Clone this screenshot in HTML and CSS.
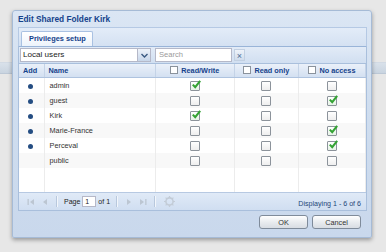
FILE: index.html
```html
<!DOCTYPE html>
<html lang="en">

<head>
  <meta charset="UTF-8">
  <title>Edit Shared Folder Kirk</title>
  <link rel="stylesheet" href="styles.css">
</head>

<body>
  <div class="desktop">
    <div class="bg-band"></div>
  </div>

  <div class="window">
    <div class="win-title">Edit Shared Folder Kirk</div>

    <div class="win-body">
      <div class="tabs">
        <div class="tab active">Privileges setup</div>
      </div>

      <div class="panel">
        <div class="toolbar">
          <div class="combo">
            <span class="combo-text">Local users</span>
            <span class="combo-trigger">
              <svg width="7" height="5" viewBox="0 0 7 5"><path d="M0.5 1 L3.5 4 L6.5 1" fill="none" stroke="#3b5a82" stroke-width="1.4"/></svg>
            </span>
          </div>
          <div class="search">Search</div>
          <div class="clear-btn">×</div>
        </div>

        <table class="grid">
          <colgroup>
            <col class="c-add">
            <col class="c-name">
            <col class="c-rw">
            <col class="c-ro">
            <col class="c-na">
          </colgroup>
          <thead>
            <tr>
              <th class="left">Add</th>
              <th class="left">Name</th>
              <th><span class="hbox"></span>Read/Write</th>
              <th><span class="hbox"></span>Read only</th>
              <th><span class="hbox"></span>No access</th>
            </tr>
          </thead>
          <tbody>
            <tr>
              <td><span class="dot"></span></td>
              <td class="name">admin</td>
              <td><span class="cb on"></span></td>
              <td><span class="cb"></span></td>
              <td><span class="cb"></span></td>
            </tr>
            <tr class="alt">
              <td><span class="dot"></span></td>
              <td class="name">guest</td>
              <td><span class="cb"></span></td>
              <td><span class="cb"></span></td>
              <td><span class="cb on"></span></td>
            </tr>
            <tr>
              <td><span class="dot"></span></td>
              <td class="name">Kirk</td>
              <td><span class="cb on"></span></td>
              <td><span class="cb"></span></td>
              <td><span class="cb"></span></td>
            </tr>
            <tr class="alt">
              <td><span class="dot"></span></td>
              <td class="name">Marie-France</td>
              <td><span class="cb"></span></td>
              <td><span class="cb"></span></td>
              <td><span class="cb on"></span></td>
            </tr>
            <tr>
              <td><span class="dot"></span></td>
              <td class="name">Perceval</td>
              <td><span class="cb"></span></td>
              <td><span class="cb"></span></td>
              <td><span class="cb on"></span></td>
            </tr>
            <tr class="alt">
              <td></td>
              <td class="name">public</td>
              <td><span class="cb"></span></td>
              <td><span class="cb"></span></td>
              <td><span class="cb"></span></td>
            </tr>
            <tr class="filler">
              <td></td><td></td><td></td><td></td><td></td>
            </tr>
          </tbody>
        </table>

        <div class="paging">
          <span class="pg-icon">
            <svg width="8" height="8" viewBox="0 0 8 8"><rect x="0.5" y="1" width="1.3" height="6" fill="#bcc6d2"/><path d="M7 1 L3 4 L7 7 Z" fill="#bcc6d2"/></svg>
          </span>
          <span class="pg-icon">
            <svg width="8" height="8" viewBox="0 0 8 8"><path d="M6 1 L2 4 L6 7 Z" fill="#bcc6d2"/></svg>
          </span>
          <span class="pg-sep"></span>
          <span class="pg-text">Page</span>
          <span class="pg-input">1</span>
          <span class="pg-text">of 1</span>
          <span class="pg-sep"></span>
          <span class="pg-icon">
            <svg width="8" height="8" viewBox="0 0 8 8"><path d="M2 1 L6 4 L2 7 Z" fill="#bcc6d2"/></svg>
          </span>
          <span class="pg-icon">
            <svg width="8" height="8" viewBox="0 0 8 8"><path d="M1 1 L5 4 L1 7 Z" fill="#bcc6d2"/><rect x="6.2" y="1" width="1.3" height="6" fill="#bcc6d2"/></svg>
          </span>
          <span class="pg-sep"></span>
          <span class="pg-icon refresh">
            <svg width="11" height="11" viewBox="0 0 11 11"><circle cx="5.5" cy="5.5" r="3.6" fill="none" stroke="#c3ccd7" stroke-width="1.6"/><path d="M5.5 0 V2 M5.5 9 V11 M0 5.5 H2 M9 5.5 H11 M1.6 1.6 L3 3 M8 8 L9.4 9.4 M9.4 1.6 L8 3 M3 8 L1.6 9.4" stroke="#c3ccd7" stroke-width="1.2"/></svg>
          </span>
          <span class="pg-display">Displaying 1 - 6 of 6</span>
        </div>
      </div>
    </div>

    <div class="win-buttons">
      <button class="btn">OK</button>
      <button class="btn">Cancel</button>
    </div>
  </div>
</body>

</html>
```

FILE: styles.css
```css
body {
  margin: 0;
  padding: 0;
  width: 386px;
  height: 252px;
  overflow: hidden;
  background-color: #e7e7e7;
  font-family: 'Liberation Sans', Arial, sans-serif;
  position: relative;
}

.desktop {
  padding-top: 62px;
}

.bg-band {
  height: 10px;
  background: linear-gradient(#d9e1ea, #c9d4e0);
  border-top: 1px solid #d2dae4;
  border-bottom: 1px solid #bcc8d6;
}

/* dialog window */
.window {
  position: absolute;
  left: 12px;
  top: 10px;
  width: 358px;
  height: 226px;
  border: 1px solid #a6bbd6;
  border-radius: 3px 3px 2px 2px;
  background: linear-gradient(#dbe6f4, #d0deef 40%, #c9d8ec);
  box-shadow: 0 2px 4px rgba(0, 0, 0, 0.35);
  display: flex;
  flex-direction: column;
}

.win-title {
  height: 16px;
  padding-left: 5px;
  font-size: 8.3px;
  font-weight: bold;
  color: #15428b;
  line-height: 17px;
}

.win-body {
  padding: 0 4px 0 5px;
}

.tabs {
  height: 18px;
  background: linear-gradient(#e3ecf8, #d4e1f2);
  border: 1px solid #b5c9e4;
  border-bottom: 1px solid #99b4d8;
  display: flex;
  align-items: flex-end;
  padding-left: 2px;
}

.tab {
  height: 14px;
  padding: 0 6px 0 7px;
  font-size: 7.4px;
  font-weight: bold;
  color: #15428b;
  line-height: 14px;
  border: 1px solid #a9c1e2;
  border-bottom: none;
  border-radius: 2px 2px 0 0;
  background: linear-gradient(#ffffff, #edf3fb);
}

.panel {
  background: #ffffff;
  border: 1px solid #a9bfdc;
  border-top: none;
}

.toolbar {
  height: 17px;
  background: linear-gradient(#e2ebf7, #d1dff1);
  border-bottom: 1px solid #a9bfdc;
  display: flex;
  align-items: center;
  padding-left: 1px;
  box-sizing: border-box;
}

.combo {
  width: 131px;
  height: 14px;
  display: flex;
  box-sizing: border-box;
  border: 1px solid #b5b8c8;
  background: #ffffff;
}

.combo-text {
  flex: 1;
  font-size: 8.1px;
  color: #222222;
  line-height: 12px;
  padding-left: 2px;
}

.combo-trigger {
  width: 12px;
  background: linear-gradient(#eef3fa, #c7d6ea);
  border-left: 1px solid #b5b8c8;
  display: flex;
  align-items: center;
  justify-content: center;
}

.search {
  width: 77px;
  height: 14px;
  box-sizing: border-box;
  margin-left: 4px;
  border: 1px solid #b5b8c8;
  background: #ffffff;
  font-size: 7.6px;
  color: #9a9a9a;
  line-height: 12px;
  padding-left: 3px;
}

.clear-btn {
  width: 11px;
  height: 12px;
  margin-left: 2px;
  font-size: 9px;
  line-height: 12px;
  text-align: center;
  color: #4c6d96;
  background: linear-gradient(#eef3fa, #d0dcec);
  border: 1px solid #c2d0e2;
  box-sizing: border-box;
}

/* grid */
.grid {
  width: 100%;
  border-collapse: collapse;
  table-layout: fixed;
}

.c-add { width: 25px; }
.c-name { width: 111px; }
.c-rw { width: 79px; }
.c-ro { width: 64px; }
.c-na { width: 67px; }

.grid th {
  height: 13px;
  padding: 0;
  font-size: 7.3px;
  font-weight: bold;
  color: #15428b;
  text-align: center;
  background: linear-gradient(#eaf0f9, #d3e0f1);
  border-right: 1px solid #c4d3e7;
  border-bottom: 1px solid #aec3df;
  white-space: nowrap;
}

.grid th.left {
  text-align: left;
  padding-left: 4px;
}

.hbox {
  display: inline-block;
  width: 6px;
  height: 6px;
  border: 1px solid #8a929c;
  background: #ffffff;
  margin-right: 3px;
  vertical-align: -1px;
}

.grid td {
  height: 15px;
  padding: 0;
  text-align: center;
  border-right: 1px solid #ececec;
  font-size: 7.3px;
  color: #333333;
}

.grid tr.alt td {
  background: #f8f8f8;
}

.grid tr.filler td {
  height: 24px;
}

.grid td.name {
  text-align: left;
  padding-left: 5px;
}

.dot {
  display: inline-block;
  width: 5px;
  height: 5px;
  border-radius: 50%;
  background: #244d82;
  vertical-align: middle;
  margin-left: -2px;
}

.cb {
  display: inline-block;
  width: 8px;
  height: 8px;
  border: 1px solid #8c939b;
  border-radius: 1px;
  background: linear-gradient(#ffffff, #eeeeee);
  vertical-align: middle;
  position: relative;
}

.cb.on {
  background: linear-gradient(#ffffff, #e6f3e6);
}

.cb.on::after {
  content: "";
  position: absolute;
  left: 1px;
  top: -2px;
  width: 9px;
  height: 9px;
  background: url("data:image/svg+xml;utf8,<svg xmlns='http://www.w3.org/2000/svg' width='9' height='9' viewBox='0 0 9 9'><path d='M0.8 4.6 L3.2 7.2 L8.2 0.8' fill='none' stroke='%2334a334' stroke-width='2.1'/></svg>") no-repeat;
}

/* paging bar */
.paging {
  height: 17px;
  background: linear-gradient(#e0eaf7, #d0def1);
  border-top: 1px solid #b7c9e2;
  display: flex;
  align-items: center;
  padding-left: 5px;
  font-size: 7px;
  color: #222222;
}

.pg-icon {
  width: 14px;
  display: flex;
  justify-content: center;
}

.pg-icon.refresh {
  width: 18px;
}

.pg-sep {
  width: 1px;
  height: 11px;
  background: #b8c8dd;
  border-right: 1px solid #f2f6fb;
  margin: 0 4px;
}

.pg-text {
  margin: 0 2px;
}

.pg-input {
  width: 14px;
  height: 11px;
  box-sizing: border-box;
  border: 1px solid #b5b8c8;
  background: #ffffff;
  line-height: 9px;
  padding-left: 2px;
  font-size: 7px;
}

.pg-display {
  margin-left: auto;
  margin-right: 5px;
  color: #1f4878;
  font-size: 7.1px;
  padding-top: 4px;
}

/* footer buttons */
.win-buttons {
  display: flex;
  justify-content: flex-end;
  gap: 4px;
  padding: 4px 10px 0 0;
}

.btn {
  width: 49px;
  height: 14px;
  padding: 0;
  font-family: 'Liberation Sans', Arial, sans-serif;
  font-size: 7.3px;
  color: #333333;
  border: 1px solid #7f8b9a;
  border-radius: 3px;
  background: linear-gradient(#ffffff, #e9ecef 50%, #d8dde3);
}
```
